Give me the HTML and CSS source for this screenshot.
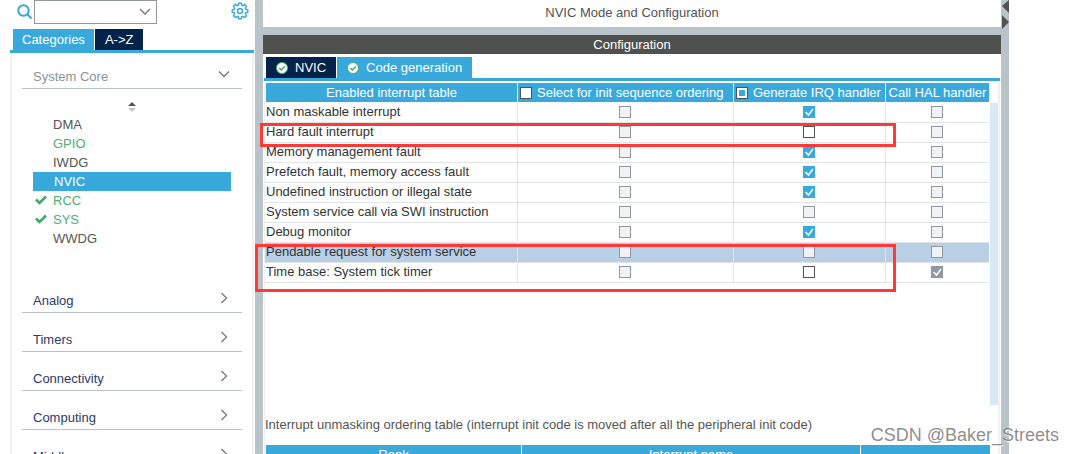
FILE: index.html
```html
<!DOCTYPE html>
<html lang="en">
<head>
<meta charset="utf-8">
<title>NVIC Mode and Configuration</title>
<link rel="stylesheet" href="styles.css">
</head>
<body>
<div class="app">
  <aside class="sidebar">
    <div class="search-row">
      <svg class="search-icon" viewBox="0 0 16 16" width="16" height="16" aria-hidden="true"><circle cx="6.5" cy="6.5" r="5.2"/><path d="M10.300 10.300l4.200 4.200"/></svg>
      <select class="search-box" aria-label="Search"><option></option></select>
      <button class="gear" aria-label="Settings">
        <svg viewBox="0 0 18 18" width="18" height="18"><circle cx="9" cy="9" r="2.5"/><path d="M7.7 1.2h2.6l.4 2 1.1.5 1.8-1.2 1.9 1.9-1.2 1.8.5 1.1 2 .4v2.6l-2 .4-.5 1.1 1.2 1.8-1.9 1.9-1.8-1.2-1.1.5-.4 2H7.7l-.4-2-1.1-.5-1.8 1.2-1.9-1.9 1.2-1.8-.5-1.1-2-.4V7.700l2-.4.5-1.100-1.200-1.800 1.900-1.900 1.800 1.200 1.100-.5z"/></svg>
      </button>
    </div>
    <div class="tabs side-tabs">
      <button class="tab active">Categories</button>
      <button class="tab">A-&gt;Z</button>
    </div>
    <nav class="categories">
      <button class="category open"><span>System Core</span><svg class="chevron" viewBox="0 0 12 12" width="12" height="12"><path d="M1 3.500l5 5 5-5"/></svg></button>
      <div class="core">
        <svg class="sort" viewBox="0 0 8 11" width="8" height="11"><path d="M0 5l4-4 4 4z" fill="#555"/><path d="M0 7h8l-4 4z" fill="#c8c8c8"/></svg>
        <ul class="peripherals">
          <li>DMA</li>
          <li class="used">GPIO</li>
          <li>IWDG</li>
          <li class="selected">NVIC</li>
          <li class="used"><svg class="tick" viewBox="0 0 12 10" width="12" height="10"><path d="M1 4.500l3.500 3.500L11 1.500"/></svg>RCC</li>
          <li class="used"><svg class="tick" viewBox="0 0 12 10" width="12" height="10"><path d="M1 4.500l3.500 3.500L11 1.500"/></svg>SYS</li>
          <li>WWDG</li>
        </ul>
      </div>
      <button class="category"><span>Analog</span><svg class="chevron" viewBox="0 0 12 12" width="12" height="12"><path d="M3.500 1l5 5-5 5"/></svg></button>
      <button class="category"><span>Timers</span><svg class="chevron" viewBox="0 0 12 12" width="12" height="12"><path d="M3.500 1l5 5-5 5"/></svg></button>
      <button class="category"><span>Connectivity</span><svg class="chevron" viewBox="0 0 12 12" width="12" height="12"><path d="M3.500 1l5 5-5 5"/></svg></button>
      <button class="category"><span>Computing</span><svg class="chevron" viewBox="0 0 12 12" width="12" height="12"><path d="M3.500 1l5 5-5 5"/></svg></button>
      <button class="category"><span>Middleware</span><svg class="chevron" viewBox="0 0 12 12" width="12" height="12"><path d="M3.500 1l5 5-5 5"/></svg></button>
    </nav>
  </aside>
  <div class="splitter"></div>
  <main class="main">
    <h1 class="mode-title">NVIC Mode and Configuration</h1>
    <div class="h-splitter"></div>
    <h2 class="config-title">Configuration</h2>
    <section class="config">
      <div class="tabs">
        <button class="tab"><svg class="ok" viewBox="0 0 12 12" width="12" height="12"><circle cx="6" cy="6" r="5.500"/><path d="M3.300 6l2 2 3.500-3.600"/></svg>NVIC</button>
        <button class="tab active"><svg class="ok" viewBox="0 0 12 12" width="12" height="12"><circle cx="6" cy="6" r="5.500"/><path d="M3.300 6l2 2 3.500-3.600"/></svg>Code generation</button>
      </div>
      <div class="config-body">
        <div class="table-area">
          <div class="table-wrap">
            <table class="interrupts">
              <colgroup><col><col class="c-select"><col class="c-irq"><col class="c-hal"></colgroup>
              <thead><tr>
                <th>Enabled interrupt table</th>
                <th><label><input type="checkbox">Select for init sequence ordering</label></th>
                <th><label><input type="checkbox" class="mixed">Generate IRQ handler</label></th>
                <th>Call HAL handler</th>
              </tr></thead>
              <tbody>
                <tr><td>Non maskable interrupt</td><td><input type="checkbox" disabled aria-label="Select"></td><td><input type="checkbox" checked aria-label="Generate IRQ"></td><td><input type="checkbox" disabled aria-label="Call HAL"></td></tr>
                <tr><td>Hard fault interrupt</td><td><input type="checkbox" disabled aria-label="Select"></td><td><input type="checkbox" aria-label="Generate IRQ"></td><td><input type="checkbox" disabled aria-label="Call HAL"></td></tr>
                <tr><td>Memory management fault</td><td><input type="checkbox" disabled aria-label="Select"></td><td><input type="checkbox" checked aria-label="Generate IRQ"></td><td><input type="checkbox" disabled aria-label="Call HAL"></td></tr>
                <tr><td>Prefetch fault, memory access fault</td><td><input type="checkbox" disabled aria-label="Select"></td><td><input type="checkbox" checked aria-label="Generate IRQ"></td><td><input type="checkbox" disabled aria-label="Call HAL"></td></tr>
                <tr><td>Undefined instruction or illegal state</td><td><input type="checkbox" disabled aria-label="Select"></td><td><input type="checkbox" checked aria-label="Generate IRQ"></td><td><input type="checkbox" disabled aria-label="Call HAL"></td></tr>
                <tr><td>System service call via SWI instruction</td><td><input type="checkbox" disabled aria-label="Select"></td><td><input type="checkbox" disabled aria-label="Generate IRQ"></td><td><input type="checkbox" disabled aria-label="Call HAL"></td></tr>
                <tr><td>Debug monitor</td><td><input type="checkbox" disabled aria-label="Select"></td><td><input type="checkbox" checked aria-label="Generate IRQ"></td><td><input type="checkbox" disabled aria-label="Call HAL"></td></tr>
                <tr class="current"><td>Pendable request for system service</td><td><input type="checkbox" disabled aria-label="Select"></td><td><input type="checkbox" disabled aria-label="Generate IRQ"></td><td><input type="checkbox" disabled aria-label="Call HAL"></td></tr>
                <tr><td>Time base: System tick timer</td><td><input type="checkbox" disabled aria-label="Select"></td><td><input type="checkbox" aria-label="Generate IRQ"></td><td><input type="checkbox" checked disabled aria-label="Call HAL"></td></tr>
              </tbody>
            </table>
            <div class="mark mark-fault"></div>
            <div class="mark mark-tick"></div>
          </div>
          <div class="scrollbar"></div>
        </div>
        <p class="note">Interrupt unmasking ordering table (interrupt init code is moved after all the peripheral init code)</p>
        <table class="ordering">
          <colgroup><col class="c-rank"><col><col class="c-last"></colgroup>
          <thead><tr><th>Rank</th><th>Interrupt name</th><th></th></tr></thead>
        </table>
      </div>
    </section>
  </main>
  <div class="splitter right">
    <svg viewBox="0 0 8 30" width="8" height="30" aria-hidden="true"><path d="M8 0v13L1 6z M1 15v14l7-7z"/></svg>
  </div>
  <div class="margin"></div>
  <div class="watermark">CSDN @Baker_Streets</div>
</div>
</body>
</html>
```
FILE: styles.css
```css
* { box-sizing: border-box; }

body {
  margin: 0;
  background: #fff;
  color: #333;
  font: 13px/19px "Liberation Sans", Arial, sans-serif;
}

button {
  margin: 0;
  border: 0;
  padding: 0;
  background: none;
  color: inherit;
  font: inherit;
}

.app {
  position: relative;
  display: flex;
  height: 100vh;
  overflow: hidden;
}

/* Sidebar */
.sidebar {
  flex: 0 0 255px;
  padding: 0 1px 0 10px;
}

.search-row {
  display: flex;
  align-items: flex-start;
  height: 29px;
  padding: 0 5px 0 7px;
}

.search-icon {
  margin: 4px 1px 0 0;
  fill: none;
  stroke: #39a9dc;
  stroke-width: 2;
}

.search-box {
  appearance: none;
  width: 123px;
  height: 24px;
  border: 1px solid #90989e;
  border-radius: 0;
  background: url("data:image/svg+xml,%3Csvg xmlns='http://www.w3.org/2000/svg' width='12' height='8'%3E%3Cpath d='M1 1l5 5 5-5' fill='none' stroke='%23777' stroke-width='1.3'/%3E%3C/svg%3E") no-repeat right 5px center #fff;
}

.gear {
  height: 18px;
  margin: 2px 0 0 auto;
}

.gear svg {
  display: block;
  fill: none;
  stroke: #39a9dc;
  stroke-width: 1.4;
}

.tabs {
  display: flex;
  gap: 1px;
  padding-left: 2px;
  border-bottom: 3px solid #39a9dc;
}

.tab {
  display: flex;
  align-items: center;
  height: 21px;
  padding: 0 10px;
  background: #03234b;
  color: #fff;
}

.tab.active { background: #39a9dc; }

.side-tabs { padding-left: 3px; }
.side-tabs .active { padding: 0 9px; }

.categories {
  display: flex;
  flex-direction: column;
  padding: 0 10px;
  border: solid #f1f1f2;
  border-width: 0 2px;
}

.category {
  display: flex;
  align-items: flex-end;
  justify-content: space-between;
  height: 39px;
  padding: 0 12px 2px 11px;
  border-bottom: 1px solid #b9c4ca;
  color: #2c3a68;
  text-align: left;
}

.category.open {
  height: 36px;
  color: #8c9297;
}

.chevron {
  margin-bottom: 6px;
  fill: none;
  stroke: #777;
  stroke-width: 1.3;
}

.core {
  height: 185px;
  padding: 12px 11px 0;
}

.sort {
  display: block;
  margin: 0 auto 3px;
}

.peripherals {
  margin: 0;
  padding: 0;
  list-style: none;
  color: #555;
}

.peripherals li {
  position: relative;
  height: 19px;
  padding-left: 20px;
}

.peripherals .used { color: #4bb074; }

.peripherals .selected {
  padding-left: 21px;
  background: #39a9dc;
  color: #fff;
}

.tick {
  position: absolute;
  left: 2px;
  top: 4px;
  fill: none;
  stroke: #3cab68;
  stroke-width: 2.6;
}

/* Splitters */
.splitter {
  flex: 0 0 8px;
  background: #b9c4ca;
}

.splitter svg { display: block; fill: #525252; }

.h-splitter { height: 8px; background: #b9c4ca; }

.margin { flex: 0 0 66px; }

/* Main panel */
.main {
  flex: 1;
  min-width: 0;
}

.mode-title,
.config-title {
  margin: 0;
  font-size: 13px;
  font-weight: normal;
  text-align: center;
}

.mode-title {
  height: 27px;
  padding-top: 3px;
  color: #525252;
}

.config-title {
  height: 19px;
  background: #4f514f;
  color: #fff;
}

.config { padding: 3px 1px 0; }

.ok { margin-right: 7px; }
.ok circle { fill: #fff; stroke: #4bb074; }
.ok path { fill: none; stroke: #3cab68; stroke-width: 1.5; }

.config-body {
  padding-top: 1px;
  border: solid #f1f1f2;
  border-width: 0 2px 0 1px;
}

.table-area {
  display: flex;
  height: 323px;
}

.table-wrap {
  position: relative;
  flex: 1;
  margin-right: 1px;
}

.scrollbar {
  width: 8px;
  margin-top: 21px;
  background: #d9e8f5;
}

table {
  width: 100%;
  border-collapse: separate;
  border-spacing: 0;
  table-layout: fixed;
}

.c-select { width: 216px; }
.c-irq { width: 152px; }
.c-hal { width: 104px; }

th {
  height: 21px;
  padding: 0;
  border: solid #fff;
  border-width: 1px 0 1px 1px;
  background: #39a9dc;
  color: #fff;
  font-weight: normal;
  text-align: center;
  white-space: nowrap;
}

th label {
  display: flex;
  align-items: center;
  gap: 5px;
  padding-left: 2px;
}

td {
  height: 20px;
  padding: 0 2px 2px 0;
  border: solid #e1e5e8;
  border-width: 0 0 1px 1px;
  line-height: 17px;
  text-align: center;
  white-space: nowrap;
}

td:first-child {
  padding-left: 1px;
  border-left: 0;
  text-align: left;
}

.current td { background: #b9cfe6; }

input[type="checkbox"] {
  appearance: none;
  display: block;
  width: 12px;
  height: 12px;
  margin: 0;
  border: 1px solid #525252;
  background: center / 12px 12px no-repeat #fff;
}

td input[type="checkbox"] { margin: 0 auto; }

input[type="checkbox"]:disabled {
  border-color: #90989e;
  background-color: #f0f2f5;
}

input[type="checkbox"]:checked {
  border-color: #39a9dc;
  background-color: #39a9dc;
  background-image: url("data:image/svg+xml,%3Csvg xmlns='http://www.w3.org/2000/svg' width='12' height='12'%3E%3Cpath d='M2.500 6l3 3 4.500-6' fill='none' stroke='white' stroke-width='1.500'/%3E%3C/svg%3E");
}

input[type="checkbox"]:checked:disabled {
  border-color: #90989e;
  background-color: #90989e;
}

input[type="checkbox"].mixed {
  padding: 2px;
  background: linear-gradient(#39a9dc, #39a9dc) content-box no-repeat, #fff;
}

/* Highlight frames over the table */
.mark {
  position: absolute;
  right: 93px;
  border: 3px solid #ff3838;
}

.mark-fault { left: -5px; top: 41px; height: 24px; }
.mark-tick { left: -10px; top: 162px; height: 48px; }

.note {
  margin: 0;
  padding: 10px 0;
  color: #555;
}

.ordering { width: calc(100% - 8px); }
.c-rank { width: 256px; }
.c-last { width: 130px; }

.watermark {
  position: absolute;
  right: 16px;
  bottom: 8px;
  color: rgba(120, 120, 120, 0.85);
  font-size: 18px;
  line-height: 22px;
  text-shadow: 1px 1px 0 #fff;
}
```
